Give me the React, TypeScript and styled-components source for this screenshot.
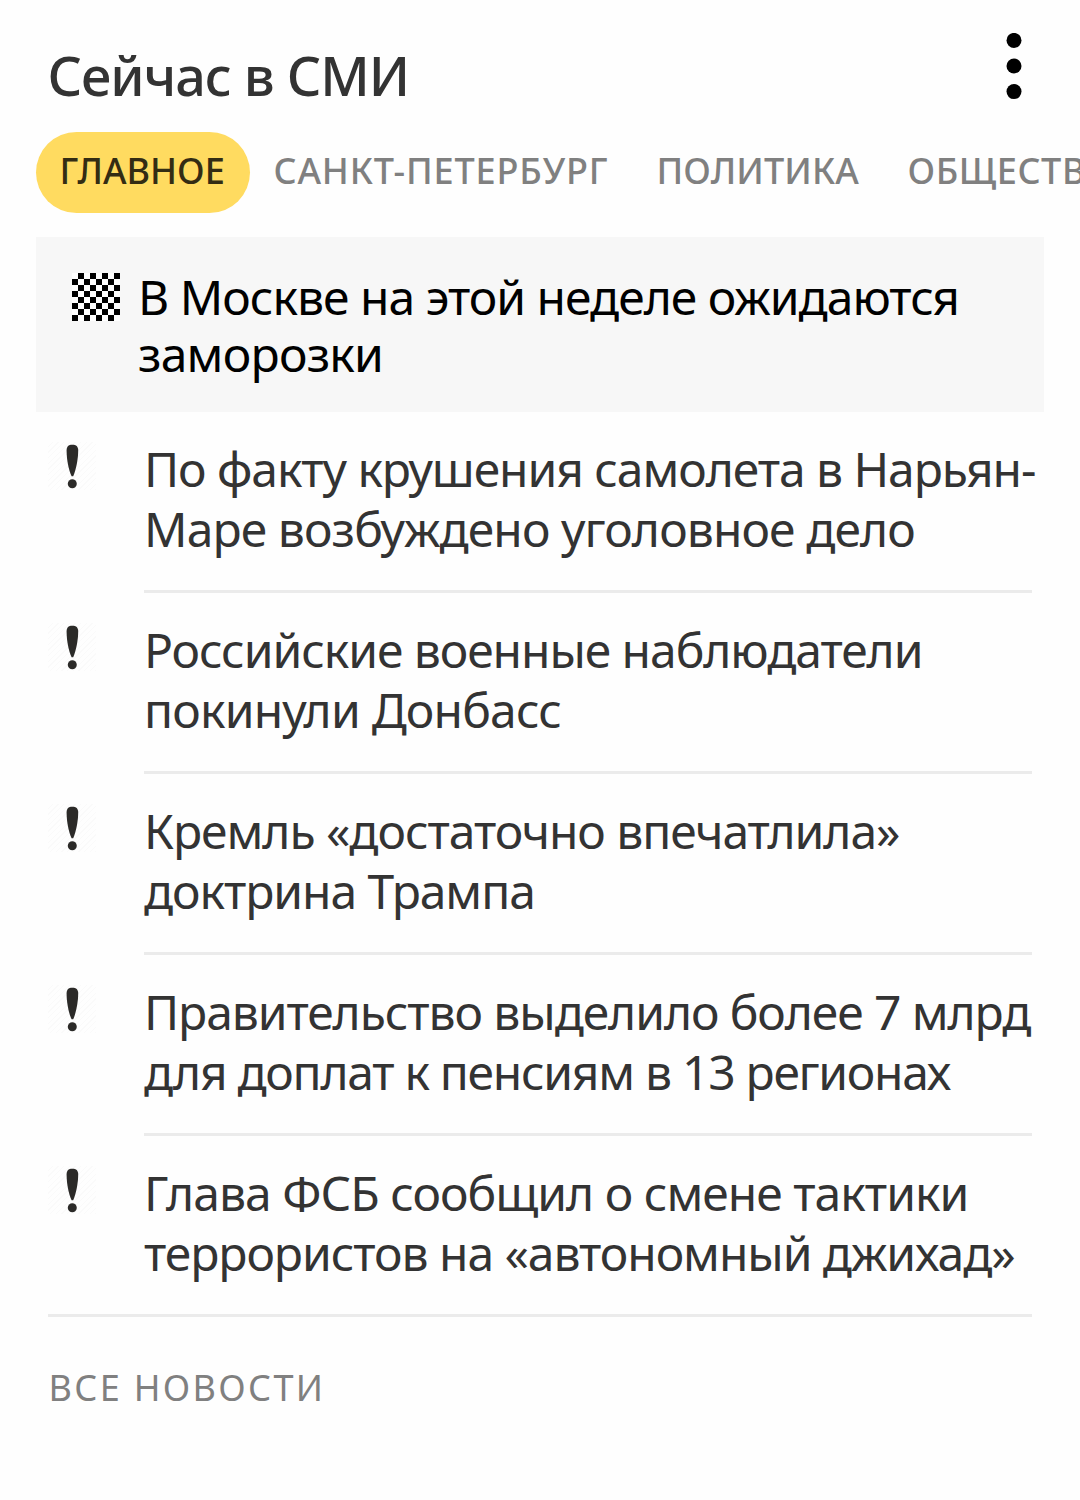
import React from 'react';
import styled, { createGlobalStyle } from 'styled-components';

const Global = createGlobalStyle`
  * { box-sizing: border-box; }
  body { margin: 0; background: #fefefe; overflow: hidden; }
`;

const Widget = styled.main`
  width: 1080px;
  height: 1500px;
  overflow: hidden;
  font-family: "Noto Sans", "Open Sans", sans-serif;
  color: #333;
`;

const Header = styled.header`
  display: flex;
  justify-content: space-between;
  height: 132px;
  padding: 33px 58px 0 47.5px;
`;

const Title = styled.h1`
  margin: 9px 0 0;
  font-size: 54px;
  font-weight: 500;
  line-height: 66px;
  letter-spacing: -1.05px;
  white-space: nowrap;
`;

const MenuButton = styled.button`
  display: flex;
  width: 16px;
  height: 68px;
  padding: 0;
  border: 0;
  background: none;
`;

const Tabs = styled.nav`
  display: flex;
  height: 81px;
  padding-left: 36px;
  overflow: hidden;
`;

const Tab = styled.a<{ $active?: boolean; $width: number; $spacing: number }>`
  flex: 0 0 ${p => p.$width}px;
  padding-left: 23.5px;
  border-radius: 41px;
  background: ${p => (p.$active ? '#ffdb60' : 'transparent')};
  color: ${p => (p.$active ? '#332c13' : '#808080')};
  font-size: 36px;
  font-weight: 500;
  line-height: 78px;
  letter-spacing: ${p => p.$spacing}px;
  white-space: nowrap;
`;

const Banner = styled.section`
  display: flex;
  gap: 18px;
  height: 175px;
  margin: 24px 36px 0;
  padding: 31px 36px 29px;
  background: #f7f7f7;
  color: #000;
`;

const Checker = styled.span`
  flex: none;
  width: 48px;
  height: 48px;
  margin-top: 5px;
  background: repeating-conic-gradient(#000 0 25%, #fff 0 50%) 0 0 / 12px 12px;
`;

const Lines = styled.div<{ $height: number }>`
  flex: 1;
  min-width: 0;
  font-size: 48px;
  line-height: ${p => p.$height}px;
`;

const Line = styled.span<{ $spacing: number }>`
  display: block;
  letter-spacing: ${p => p.$spacing}px;
  white-space: nowrap;
`;

const List = styled.ul`
  margin: 0;
  padding: 0 48px;
  list-style: none;
`;

const Item = styled.li<{ $last: boolean }>`
  display: flex;
  height: 181px;
  border-bottom: ${p => (p.$last ? '3px solid #ebebeb' : '0')};
`;

const Favicon = styled.span`
  flex: none;
  width: 48px;
  height: 48px;
  margin: 30px 48px 0 0;
  background: repeating-linear-gradient(135deg, #fefefe 0 3px, #fafafa 3px 4px);
`;

const Story = styled(Lines)<{ $last: boolean }>`
  padding-top: 27px;
  border-bottom: ${p => (p.$last ? '0' : '3px solid #ebebeb')};
`;

const AllNews = styled.a`
  display: block;
  padding: 41px 0 0 48.5px;
  color: #808080;
  font-size: 36px;
  line-height: 60px;
  letter-spacing: 2.35px;
`;

const tabs = [
  { label: 'ГЛАВНОЕ', width: 214, spacing: 0 },
  { label: 'САНКТ-ПЕТЕРБУРГ', width: 383, spacing: 0.87 },
  { label: 'ПОЛИТИКА', width: 251, spacing: 0.1 },
  { label: 'ОБЩЕСТВО', width: 260, spacing: 0.6 },
];

type TextLine = [text: string, spacing: number];

const stories: TextLine[][] = [
  [['По факту крушения самолета в Нарьян-', -1.065], ['Маре возбуждено уголовное дело', -0.9]],
  [['Российские военные наблюдатели', -1.06], ['покинули Донбасс', -0.8]],
  [['Кремль «достаточно впечатлила»', -1.05], ['доктрина Трампа', -1.07]],
  [['Правительство выделило более 7 млрд', -1.09], ['для доплат к пенсиям в 13 регионах', -1.29]],
  [['Глава ФСБ сообщил о смене тактики', -0.98], ['террористов на «автономный джихад»', -1.06]],
];

const Exclamation = () => (
  <svg width="48" height="48" viewBox="0 0 48 48" fill="#2b2a28">
    <path d="M24.3 2.7C28.3 2.7 30.2 4.4 30.2 8.5C30.2 17 28 28 25.2 34.3H23.6C20.5 28 18.6 17 18.6 8.5C18.6 4.4 20.4 2.7 24.3 2.7Z" />
    <circle cx="24.3" cy="41.7" r="4.5" />
  </svg>
);

export default function App() {
  return (
    <Widget>
      <Global />
      <Header>
        <Title>Сейчас в СМИ</Title>
        <MenuButton aria-label="Меню">
          <svg width="16" height="68" viewBox="0 0 16 68">
            <circle cx="8" cy="7.4" r="7.5" />
            <circle cx="8" cy="33" r="7.5" />
            <circle cx="8" cy="58.6" r="7.5" />
          </svg>
        </MenuButton>
      </Header>
      <Tabs>
        {tabs.map((t, i) => (
          <Tab key={t.label} $active={i === 0} $width={t.width} $spacing={t.spacing}>{t.label}</Tab>
        ))}
      </Tabs>
      <Banner>
        <Checker />
        <Lines $height={57}>
          <Line $spacing={-0.99}>В Москве на этой неделе ожидаются</Line>
          <Line $spacing={-0.75}>заморозки</Line>
        </Lines>
      </Banner>
      <List>
        {stories.map((lines, i) => {
          const last = i === stories.length - 1;
          return (
            <Item key={lines[0][0]} $last={last}>
              <Favicon><Exclamation /></Favicon>
              <Story $height={60} $last={last}>
                {lines.map(([text, spacing]) => <Line key={text} $spacing={spacing}>{text}</Line>)}
              </Story>
            </Item>
          );
        })}
      </List>
      <AllNews>ВСЕ НОВОСТИ</AllNews>
    </Widget>
  );
}
